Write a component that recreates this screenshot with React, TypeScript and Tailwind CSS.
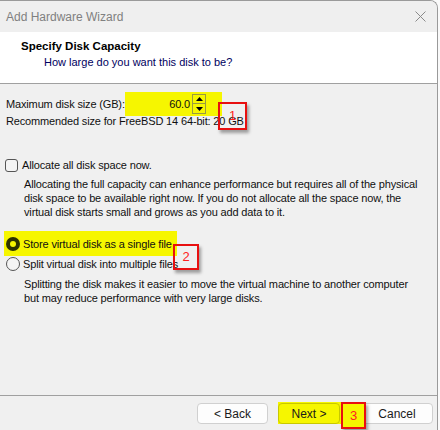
import React from "react";

function RedMark({ n, className }: { n: string; className: string }) {
  return (
    <div
      className={`absolute border-2 border-[#e81010] shadow-[2px_3px_3px_rgba(0,0,0,0.35)] flex items-center justify-center text-[#ff2020] text-[13px] ${className}`}
    >
      {n}
    </div>
  );
}

function Button({ label, className = "" }: { label: string; className?: string }) {
  return (
    <div
      className={`h-[21px] rounded-[4px] border border-[#d0d0d0] bg-[#fdfdfd] flex items-center justify-center text-[12px] text-[#1a1a1a] ${className}`}
    >
      {label}
    </div>
  );
}

export default function App() {
  return (
    <div
      className="relative w-[440px] h-[430px] bg-[#fafafa] overflow-hidden"
      style={{ fontFamily: '"Liberation Sans", Arial, sans-serif' }}
    >
      <div className="w-[438px] h-[430px] border-t border-r border-[#9a9a9a] rounded-tr-[8px] bg-[#f0f0f0] flex flex-col overflow-hidden">
        {/* Title bar */}
        <div className="h-[31px] flex items-center justify-between pl-[6px] pr-[10px] bg-[#efefef]">
          <span className="text-[12px] text-[#808080]">Add Hardware Wizard</span>
          <svg width="11" height="11" viewBox="0 0 11 11" className="mr-[1px]">
            <path d="M0.5 0.5 L10.5 10.5 M10.5 0.5 L0.5 10.5" stroke="#8a8a8a" strokeWidth="1" />
          </svg>
        </div>
        {/* Header */}
        <div className="h-[52px] bg-white border-b border-[#a0a0a0] pt-[7px]">
          <div className="pl-[21px] text-[11.5px] font-bold text-black leading-[14px]">Specify Disk Capacity</div>
          <div className="pl-[44px] mt-[2px] text-[11px] text-[#000060] leading-[14px]">How large do you want this disk to be?</div>
        </div>
        {/* Body */}
        <div className="relative flex-1 pl-[6px] text-[11px] tracking-[-0.15px] text-[#101010] leading-[14px]">
          <div className="mt-[8px] h-[24px] flex items-center">
            <span className="w-[119px] whitespace-nowrap">Maximum disk size (GB):</span>
            <div className="w-[97px] h-[24px] bg-[#f6f600] flex items-center">
              <div className="w-[66px] text-right pr-[1px]">60.0</div>
              <div className="ml-[1px] flex flex-col">
                <div className="w-[14px] h-[10px] border border-[#9a9a40] flex items-center justify-center">
                  <svg width="7" height="4" viewBox="0 0 7 4"><path d="M3.5 0 L7 4 L0 4 Z" fill="#000" /></svg>
                </div>
                <div className="w-[14px] h-[10px] border border-t-0 border-[#9a9a40] flex items-center justify-center">
                  <svg width="7" height="4" viewBox="0 0 7 4"><path d="M0 0 L7 0 L3.5 4 Z" fill="#000" /></svg>
                </div>
              </div>
            </div>
          </div>
          <div className="-mt-[2px] whitespace-nowrap">Recommended size for FreeBSD 14 64-bit: 20 GB</div>

          <div className="mt-[30px] flex items-center h-[14px]">
            <div className="w-[13px] h-[13px] rounded-[3px] border border-[#555] bg-[#f4f4f4] ml-[-1px]" />
            <span className="ml-[4px] whitespace-nowrap">Allocate all disk space now.</span>
          </div>
          <div className="mt-[5px] pl-[18px] whitespace-nowrap">
            <div>Allocating the full capacity can enhance performance but requires all of the physical</div>
            <div>disk space to be available right now. If you do not allocate all the space now, the</div>
            <div>virtual disk starts small and grows as you add data to it.</div>
          </div>

          <div className="mt-[12px] -ml-[2px] w-[173px] h-[25px] bg-[#f6f600] flex items-center pl-[2px]">
            <div className="w-[14px] h-[14px] rounded-full bg-[#2c3300] flex items-center justify-center">
              <div className="w-[6px] h-[6px] rounded-full bg-[#f6f600]" />
            </div>
            <span className="ml-[3px] whitespace-nowrap">Store virtual disk as a single file</span>
          </div>
          <div className="mt-[1px] flex items-center h-[14px]">
            <div className="w-[14px] h-[14px] rounded-full border border-[#555] bg-[#f4f4f4]" />
            <span className="ml-[3px] whitespace-nowrap">Split virtual disk into multiple files</span>
          </div>
          <div className="mt-[6px] pl-[18px] whitespace-nowrap">
            <div>Splitting the disk makes it easier to move the virtual machine to another computer</div>
            <div>but may reduce performance with very large disks.</div>
          </div>
        </div>
        {/* Footer */}
        <div className="h-[35px] border-t border-[#a0a0a0] flex items-start pt-[7px] pl-[197px]">
          <Button label="< Back" className="w-[71px]" />
          <div className="ml-[10px] w-[80px] h-[22px] -mt-[1px] bg-[#f6f600] flex items-start">
            <div className="w-[62px] h-[21px] mt-[1px] rounded-[4px] border border-[#c8c800] flex items-center justify-center text-[12px] text-[#1a1a1a]">
              Next &gt;
            </div>
          </div>
          <Button label="Cancel" className="ml-[3px] w-[72px]" />
        </div>
      </div>

      <RedMark n="1" className="left-[218px] top-[102px] w-[29px] h-[28px]" />
      <RedMark n="2" className="left-[173px] top-[244px] w-[26px] h-[26px]" />
      <RedMark n="3" className="left-[341px] top-[402px] w-[25px] h-[27px] bg-[#f6f600]" />
    </div>
  );
}
